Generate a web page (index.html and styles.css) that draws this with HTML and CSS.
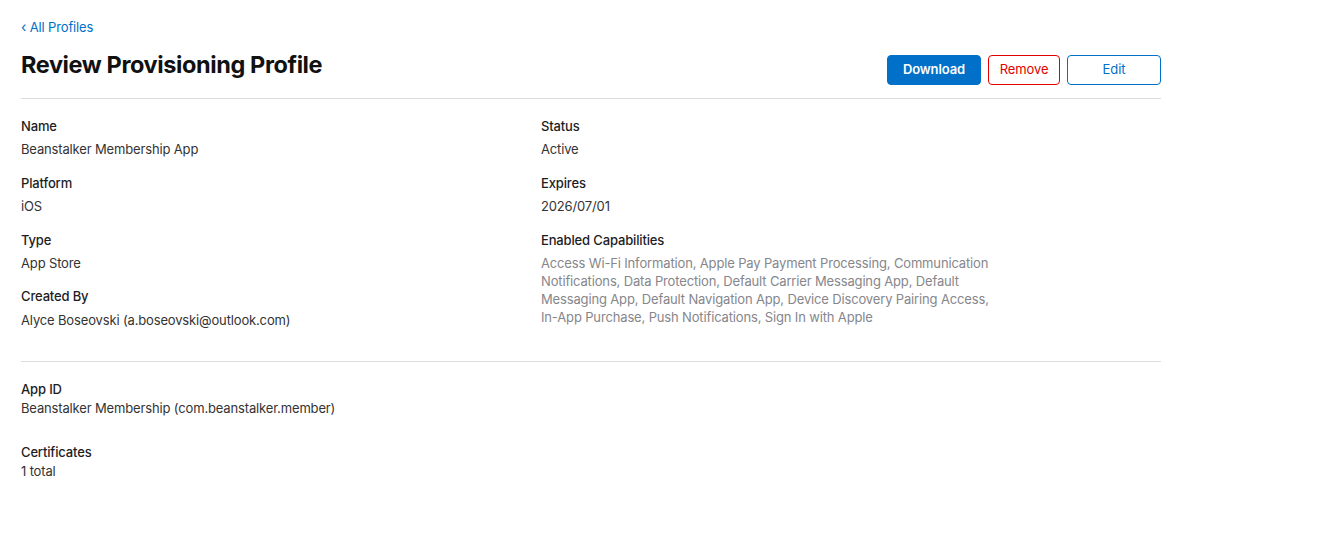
FILE: index.html
```html
<!DOCTYPE html>
<html lang="en">
<head>
<meta charset="utf-8">
<title>Review Provisioning Profile</title>
<link rel="stylesheet" href="styles.css">
</head>
<body>
<main class="page">
  <a class="back" href="#"><span class="chev">&lsaquo;</span> All Profiles</a>
  <header class="header">
    <h1 class="title">Review Provisioning Profile</h1>
    <div class="actions">
      <button class="btn btn-primary">Download</button>
      <button class="btn btn-danger">Remove</button>
      <button class="btn btn-outline">Edit</button>
    </div>
  </header>

  <section class="details">
    <div class="col col-left">
      <div class="field">
        <div class="label">Name</div>
        <div class="value">Beanstalker Membership App</div>
      </div>
      <div class="field">
        <div class="label">Platform</div>
        <div class="value">iOS</div>
      </div>
      <div class="field">
        <div class="label">Type</div>
        <div class="value">App Store</div>
      </div>
      <div class="field">
        <div class="label">Created By</div>
        <div class="value">Alyce Boseovski (a.boseovski@outlook.com)</div>
      </div>
    </div>
    <div class="col col-right">
      <div class="field">
        <div class="label">Status</div>
        <div class="value">Active</div>
      </div>
      <div class="field">
        <div class="label">Expires</div>
        <div class="value">2026/07/01</div>
      </div>
      <div class="field">
        <div class="label">Enabled Capabilities</div>
        <div class="value muted caps">Access Wi-Fi Information, Apple Pay Payment Processing, Communication Notifications, Data Protection, Default Carrier Messaging App, Default Messaging App, Default Navigation App, Device Discovery Pairing Access, In-App Purchase, Push Notifications, Sign In with Apple</div>
      </div>
    </div>
  </section>

  <section class="extra">
    <div class="field-tight">
      <div class="label">App ID</div>
      <div class="value">Beanstalker Membership (com.beanstalker.member)</div>
    </div>
    <div class="field-tight">
      <div class="label">Certificates</div>
      <div class="value">1 total</div>
    </div>
  </section>
</main>
</body>
</html>
```

FILE: styles.css
```css
* { box-sizing: border-box; }

html, body {
  margin: 0;
  padding: 0;
  background: #ffffff;
}

body {
  font-family: Inter, "Noto Sans", "Liberation Sans", sans-serif;
  font-size: 13px;
  letter-spacing: -0.15px;
  color: #333333;
}

.page {
  width: 1182px;
  padding: 19px 21px 0 21px;
}

.back {
  display: block;
  line-height: 16px;
  color: #0070c9;
  text-decoration: none;
  font-size: 13px;
}

.chev {
  font-size: 14px;
}

.header {
  margin-top: 15px;
  display: flex;
  justify-content: space-between;
  align-items: flex-start;
  padding-bottom: 13px;
  border-bottom: 1px solid #dcdcdc;
}

.title {
  margin: 0;
  font-size: 23.5px;
  line-height: 30px;
  font-weight: 700;
  color: #111111;
  letter-spacing: -0.4px;
}

.actions {
  display: flex;
  gap: 7px;
  margin-top: 5px;
}

.btn {
  height: 30px;
  border-radius: 4px;
  font-family: inherit;
  font-size: 13px;
  letter-spacing: -0.1px;
  background: #ffffff;
  padding: 0 0 3px 0;
  cursor: pointer;
}

.btn-primary {
  width: 94px;
  background: #0070c9;
  border: 1px solid #0070c9;
  color: #ffffff;
  font-weight: 600;
}

.btn-danger {
  width: 72px;
  border: 1px solid #e30000;
  color: #e30000;
}

.btn-outline {
  width: 94px;
  border: 1px solid #0070c9;
  color: #0070c9;
}

.details {
  display: grid;
  grid-template-columns: 520px 1fr;
  padding: 18px 0 32px 0;
  border-bottom: 1px solid #dcdcdc;
}

.field {
  margin-bottom: 15.5px;
}

.field:last-child {
  margin-bottom: 0;
}

.label {
  line-height: 18px;
  font-weight: 500;
  color: #1d1d1f;
}

.field .value {
  margin-top: 5.3px;
  line-height: 18px;
}

.muted {
  color: #86868b;
}

.caps {
  max-width: 460px;
}

.extra {
  padding-top: 18px;
}

.field-tight {
  margin-bottom: 26px;
}

.field-tight .value {
  margin-top: 1px;
  line-height: 18px;
}
```
